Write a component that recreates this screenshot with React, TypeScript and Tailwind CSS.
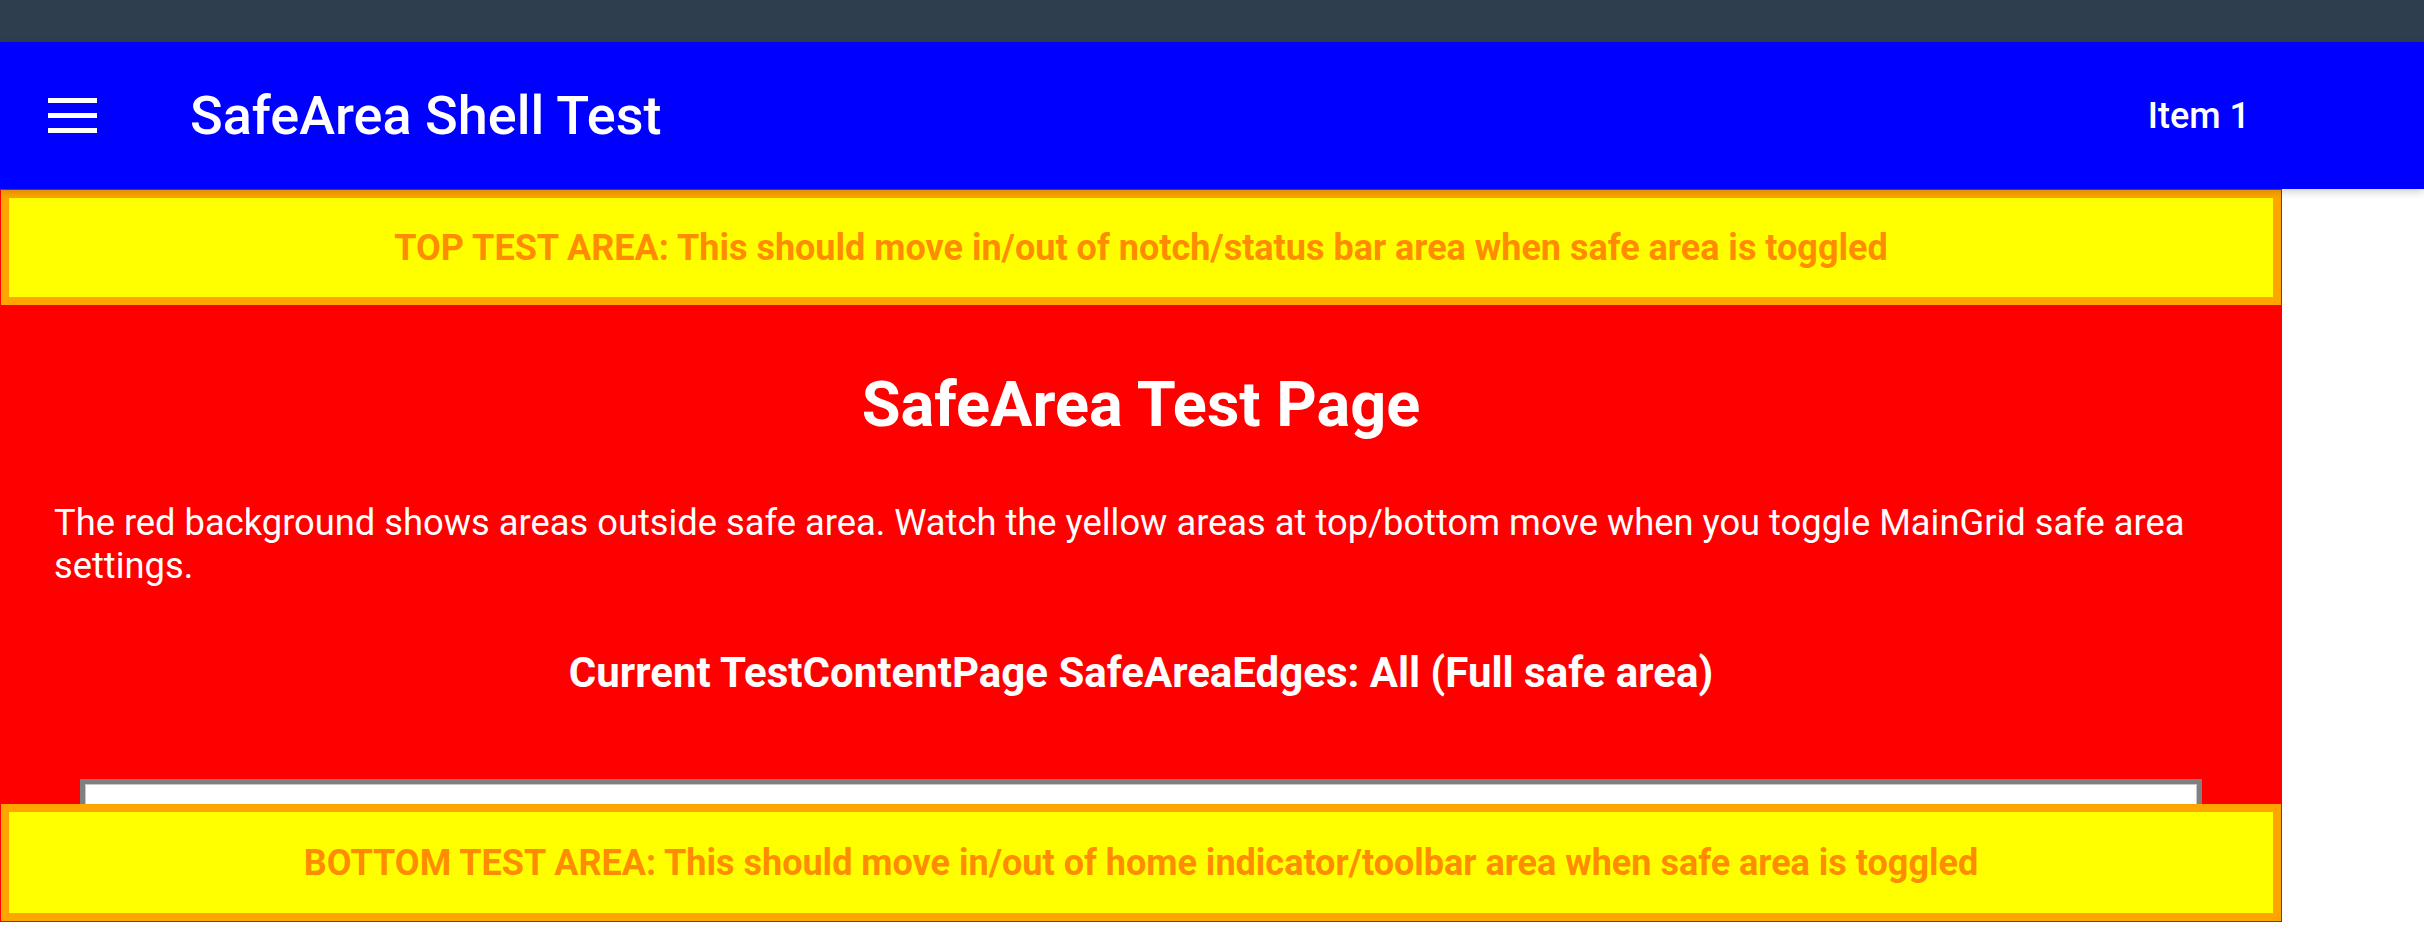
export default function App() {
  return (
    <div className="w-[2424px] h-[945px] bg-white font-['Roboto',sans-serif] flex flex-col overflow-hidden">
      <div className="h-[42px] bg-[#2f3e4f] shrink-0" />

      <header className="h-[147px] shrink-0 bg-[#0000ff] flex items-center relative z-10 shadow-[0_3px_8px_rgba(0,0,0,0.18)] text-white">
        <svg className="ml-[48px] w-[49px] h-[35px]" viewBox="0 0 49 35" fill="white">
          <rect x="0" y="0" width="49" height="5" />
          <rect x="0" y="15" width="49" height="5" />
          <rect x="0" y="30" width="49" height="5" />
        </svg>
        <h1 className="ml-[93px] text-[54px] leading-none font-medium">SafeArea Shell Test</h1>
        <div className="ml-auto mr-[174px] text-[36px] font-medium">Item 1</div>
      </header>

      <main className="relative w-[2282px] h-[733px] bg-[#ff0000] flex flex-col overflow-hidden">
        <div className="mt-[1px] mx-[1px] h-[115px] shrink-0 bg-[#ffff00] border-[8px] border-[#ffa500] flex items-center justify-center">
          <p className="text-[#ff8c00] text-[36px] font-bold leading-none">
            TOP TEST AREA: This should move in/out of notch/status bar area when safe area is toggled
          </p>
        </div>

        <h2 className="mt-[63px] text-center text-white text-[63px] leading-[73px] font-bold">SafeArea Test Page</h2>

        <p className="mt-[60px] px-[54px] text-white text-[36.3px] leading-[43px]">
          The red background shows areas outside safe area. Watch the yellow areas at top/bottom move when you toggle MainGrid safe area settings.
        </p>

        <p className="mt-[61px] text-center text-white text-[42px] leading-[49px] font-bold">
          Current TestContentPage SafeAreaEdges: All (Full safe area)
        </p>

        <div className="mt-[82px] ml-[80px] mr-[80px] h-[140px] shrink-0 bg-white border-[5px] border-[#808080] shadow-[inset_0_0_0_1px_#c8c8c8]" />

        <div className="absolute left-[1px] right-[1px] top-[615px] h-[117px] bg-[#ffff00] border-[8px] border-[#ffa500] flex items-center justify-center">
          <p className="text-[#ff8c00] text-[36px] font-bold leading-none">
            BOTTOM TEST AREA: This should move in/out of home indicator/toolbar area when safe area is toggled
          </p>
        </div>
      </main>
    </div>
  );
}
